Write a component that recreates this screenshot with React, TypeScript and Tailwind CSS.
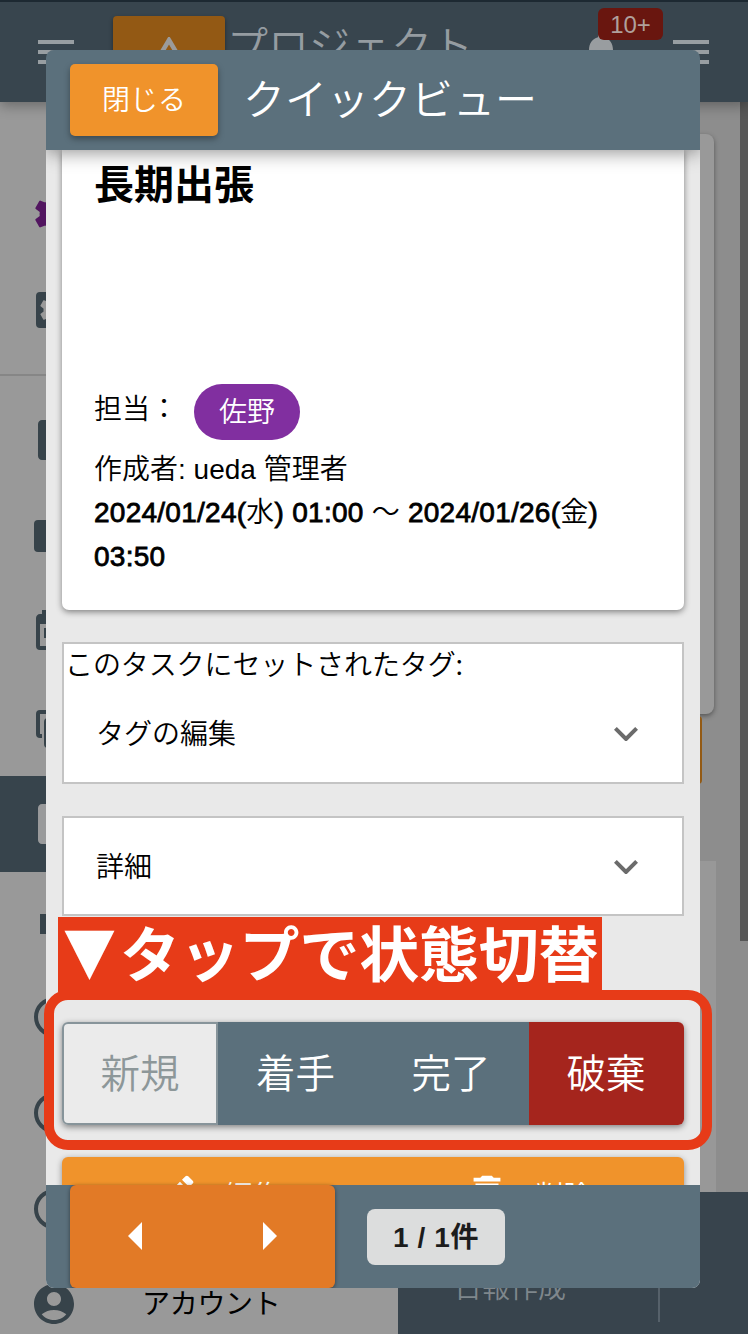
import React from "react";
import {
  MdAccountCircle,
  MdDelete,
  MdEdit,
  MdInsertDriveFile,
  MdMenu,
  MdNotifications,
  MdSettings,
  MdSettingsApplications,
  MdToday,
} from "react-icons/md";

function NavRow({
  children,
  label,
  active = false,
}: {
  children: React.ReactNode;
  label?: string;
  active?: boolean;
}) {
  return (
    <div
      className={`flex h-24 shrink-0 items-center pl-[30px] ${
        active ? "bg-[#37444c] text-[#999a9b]" : "text-[#37434a]"
      }`}
    >
      {children}
      {label && <span className="ml-[64px] pb-[5px] text-[28px] leading-[40px] tracking-[-0.3px] text-black">{label}</span>}
    </div>
  );
}

const BoxIcon = () => (
  <svg viewBox="0 0 24 24" className="size-12" fill="currentColor">
    <rect x="2" y="4" width="20" height="16" rx="2" />
  </svg>
);

const CopyIcon = () => (
  <svg viewBox="0 0 24 24" className="size-12" fill="none" stroke="currentColor" strokeWidth="2">
    <path d="M6 16H5a1 1 0 0 1-1-1V5a1 1 0 0 1 1-1h11" />
    <rect x="8" y="8" width="13" height="13" rx="1" />
  </svg>
);

const ClipIcon = () => (
  <svg viewBox="0 0 24 24" className="size-12" fill="currentColor">
    <path d="M5 9h14v10H5z" />
  </svg>
);

const RingIcon = () => (
  <svg viewBox="0 0 24 24" className="mt-[2px] size-12" fill="none" stroke="currentColor" strokeWidth="2">
    <circle cx="12" cy="12" r="9" />
  </svg>
);

const Chevron = () => (
  <svg viewBox="0 0 24 14" className="mt-[2px] h-[14px] w-6" fill="none" stroke="#6b6b6b" strokeWidth="4">
    <path d="M1.4 1.4 12 12 22.6 1.4" />
  </svg>
);

function Backdrop() {
  return (
    <div className="flex h-full flex-col">
      <header className="relative z-10 flex h-[102px] shrink-0 items-start border-t-2 border-[#1d2932] bg-[#38454e] shadow-[0_4px_12px_rgba(0,0,0,0.3)]">
        <MdMenu className="mt-[26px] ml-[32px] size-12 text-[#989ea2]" />
        <div className="mt-[14px] ml-[33px] flex h-[72px] w-28 justify-center rounded bg-[#935914] shadow-[0_2px_4px_rgba(0,0,0,0.4)]">
          <svg viewBox="0 0 24 20" className="mt-[21px] h-5 w-6" fill="none" stroke="#9b9b9b" strokeWidth="4.5">
            <path d="M2 20 12 3 22 20" />
          </svg>
        </div>
        <h1 className="mt-[11px] ml-[2px] text-[41px] leading-[60px] font-[350] text-[#959ca1]">プロジェクト</h1>
        <div className="relative ml-auto mr-[42px] pt-[26px]">
          <MdNotifications className="size-12 text-[#999da0]" />
          <span className="absolute top-[6px] left-[21px] h-8 w-[65px] rounded-md bg-[#69160f] text-center font-['Liberation_Sans'] text-[24px] leading-[34px] text-[#b0a09c]">
            10+
          </span>
        </div>
        <MdMenu className="mt-[26px] mr-[33px] size-12 text-[#989ea2]" />
      </header>
      <div className="flex min-h-0 flex-1">
        <nav className="flex w-[398px] flex-col overflow-hidden bg-[#999] pt-16">
          <NavRow>
            <MdSettings className="size-12 text-[#521560]" />
          </NavRow>
          <NavRow>
            <MdSettingsApplications className="size-12" />
          </NavRow>
          <div className="my-4 h-[2px] shrink-0 bg-[#868686]" />
          <NavRow>
            <MdInsertDriveFile className="size-12" />
          </NavRow>
          <NavRow>
            <BoxIcon />
          </NavRow>
          <NavRow>
            <MdToday className="size-12" />
          </NavRow>
          <NavRow>
            <CopyIcon />
          </NavRow>
          <NavRow active>
            <MdInsertDriveFile className="size-12" />
          </NavRow>
          <NavRow>
            <ClipIcon />
          </NavRow>
          <NavRow>
            <RingIcon />
          </NavRow>
          <NavRow>
            <RingIcon />
          </NavRow>
          <NavRow>
            <RingIcon />
          </NavRow>
          <NavRow label="アカウント">
            <MdAccountCircle className="size-12" />
          </NavRow>
        </nav>
        <main className="flex min-w-0 flex-1 flex-col bg-[#8d8d8d]">
          <div className="flex h-[1090px]">
            <div className="flex flex-1 flex-col items-start pt-8">
              <div className="h-[580px] w-[316px] rounded-r-lg bg-[#999] shadow-[0_2px_5px_rgba(0,0,0,0.4)]" />
              <div className="mt-[2px] h-[68px] w-[304px] rounded-r bg-[#935a14]" />
              <div className="mt-[77px] w-[318px] flex-1 bg-[#989898]" />
            </div>
            <div className="h-[839px] w-2 bg-[#575757]" />
          </div>
          <footer className="flex flex-1 bg-[#38444d]">
            <div className="mb-[12px] flex w-[262px] items-center justify-center border-r-2 border-[#56616a] pr-[36px]">
              <span className="mt-[57px] text-[28px] leading-[40px] font-[350] text-[#7f878c]">日報作成</span>
            </div>
          </footer>
        </main>
      </div>
    </div>
  );
}

function QuickView() {
  return (
    <section className="absolute top-[50px] left-[46px] flex h-[1238px] w-[654px] flex-col overflow-hidden rounded-lg bg-[#e9e9e9]">
      <header className="relative z-10 flex h-[100px] shrink-0 items-center bg-[#5b707c] pl-6 shadow-[0_2px_18px_rgba(0,0,0,0.45)]">
        <button className="h-[72px] w-[148px] rounded-[5px] bg-[#f0932b] pb-[3px] text-[28px] leading-[69px] font-[350] text-white shadow-[0_3px_6px_rgba(0,0,0,0.35)]">
          閉じる
        </button>
        <h2 className="ml-[25px] pb-[6px] text-[42px] leading-[60px] font-[350] text-white">クイックビュー</h2>
      </header>

      <div className="flex min-h-0 flex-1 flex-col overflow-hidden px-4">
        <article className="h-[460px] shrink-0 rounded-b-[7px] bg-white px-8 text-[28px] font-[350] text-black shadow-[0_2px_6px_rgba(0,0,0,0.45)]">
          <h3 className="pt-[2px] text-[40px] leading-[60px] font-bold">長期出張</h3>
          <div className="mt-[172px] flex h-14 items-center">
            <span className="w-[100px] pb-[10px] leading-[40px]">担当：</span>
            <span className="h-14 w-[106px] rounded-full bg-[#812fa0] text-center leading-[53px] text-white">
              佐野
            </span>
          </div>
          <p className="mt-[8px] font-['Liberation_Sans','Noto_Sans_CJK_JP',sans-serif] leading-[44px]">
            作成者: ueda 管理者
          </p>
          <p className="-mt-px font-['Liberation_Sans','Noto_Sans_CJK_JP',sans-serif] leading-[44px] tracking-[0.26px]">
            <Medium>2024/01/24(</Medium>水<Medium>) 01:00</Medium> ～ <Medium>2024/01/26(</Medium>金
            <Medium>) 03:50</Medium>
          </p>
        </article>

        <div className="mt-8 h-[142px] shrink-0 border-2 border-[#c4c4c4] bg-white text-[28px] leading-[40px] font-[350] text-black">
          <p className="-mt-px mb-px pl-px tracking-[-0.1px]">このタスクにセットされたタグ:</p>
          <div className="flex h-[98px] items-center justify-between pr-[44px] pl-8">
            <span className="pb-[2px]">タグの編集</span>
            <Chevron />
          </div>
        </div>

        <div className="mt-8 flex h-[100px] shrink-0 items-center justify-between border-2 border-[#c4c4c4] bg-white pr-[44px] pl-8 text-[28px] leading-[40px] font-[350] text-black">
          <span className="pb-[3px]">詳細</span>
          <Chevron />
        </div>

        <div className="mt-[106px] flex h-[103px] shrink-0 rounded-md text-center text-[39.5px] leading-[97px] font-[350] text-white shadow-[0_2px_6px_rgba(0,0,0,0.45)]">
          <button className="w-[156px] rounded-l-md border-2 border-[#87949a] bg-[#ebebeb] pb-[6px] leading-[93px] text-[#8d9799]">
            新規
          </button>
          <button className="w-[155px] bg-[#5b707c] pb-[6px]">着手</button>
          <button className="w-[156px] bg-[#5b707c] pb-[6px]">完了</button>
          <button className="w-[155px] rounded-r-md bg-[#a5251d] pr-px pb-[6px]">破棄</button>
        </div>

        <div className="mt-8 flex h-[72px] shrink-0 rounded-md bg-[#f0932b] text-[28px] leading-[40px] font-[350] text-white shadow-[0_2px_6px_rgba(0,0,0,0.4)]">
          <button className="flex flex-1 items-center justify-center gap-[25px]">
            <MdEdit className="size-[46px]" />
            <span className="pt-[2px] pr-px">編集</span>
          </button>
          <button className="flex flex-1 items-center justify-center gap-[25px]">
            <MdDelete className="size-[46px]" />
            <span className="pt-[2px] pr-px">削除</span>
          </button>
        </div>
      </div>

      <footer className="relative z-10 flex h-[103px] shrink-0 items-center bg-[#5b707c] pl-6">
        <div className="flex h-full w-[265px] rounded-md bg-[#e27a26] shadow-[0_1px_4px_rgba(0,0,0,0.45)]">
          <button className="flex flex-1 items-center justify-center pr-[2px] pb-[2px]">
            <svg viewBox="0 0 14 28" className="h-7 w-[14px]" fill="#fff">
              <path d="M14 0v28L0 14z" />
            </svg>
          </button>
          <button className="flex flex-1 items-center justify-center pb-[2px] pl-[2px]">
            <svg viewBox="0 0 14 28" className="h-7 w-[14px]" fill="#fff">
              <path d="M0 0v28l14-14z" />
            </svg>
          </button>
        </div>
        <div className="ml-8 h-14 w-[138px] rounded-lg bg-[#dcdddd] text-center font-['Liberation_Sans','Noto_Sans_CJK_JP',sans-serif] text-[28px] leading-[57px] font-bold tracking-[0.6px] text-[#1c1c1c]">
          1 / 1件
        </div>
      </footer>
    </section>
  );
}

function Medium({ children }: { children: React.ReactNode }) {
  return <span className="[-webkit-text-stroke:0.8px_#000]">{children}</span>;
}

export default function App() {
  return (
    <div className="relative h-[1334px] w-[748px] overflow-hidden bg-[#8d8d8d] font-['Noto_Sans_CJK_JP',sans-serif]">
      <Backdrop />
      <QuickView />
      <div className="absolute top-[990px] left-[44px] h-[160px] w-[668px] rounded-[24px] border-[10px] border-[#e73b18]" />
      <div className="absolute top-[917px] left-[58px] flex h-[75px] w-[544px] bg-[#e73b18] font-bold whitespace-nowrap text-white">
        <span className="h-[70px] w-[62px] scale-y-[1.14] pl-[5px] text-[53px] leading-[66px]">▼</span>
        <span className="text-[60px] leading-[68px] tracking-[-0.2px]">タップで状態切替</span>
      </div>
    </div>
  );
}
